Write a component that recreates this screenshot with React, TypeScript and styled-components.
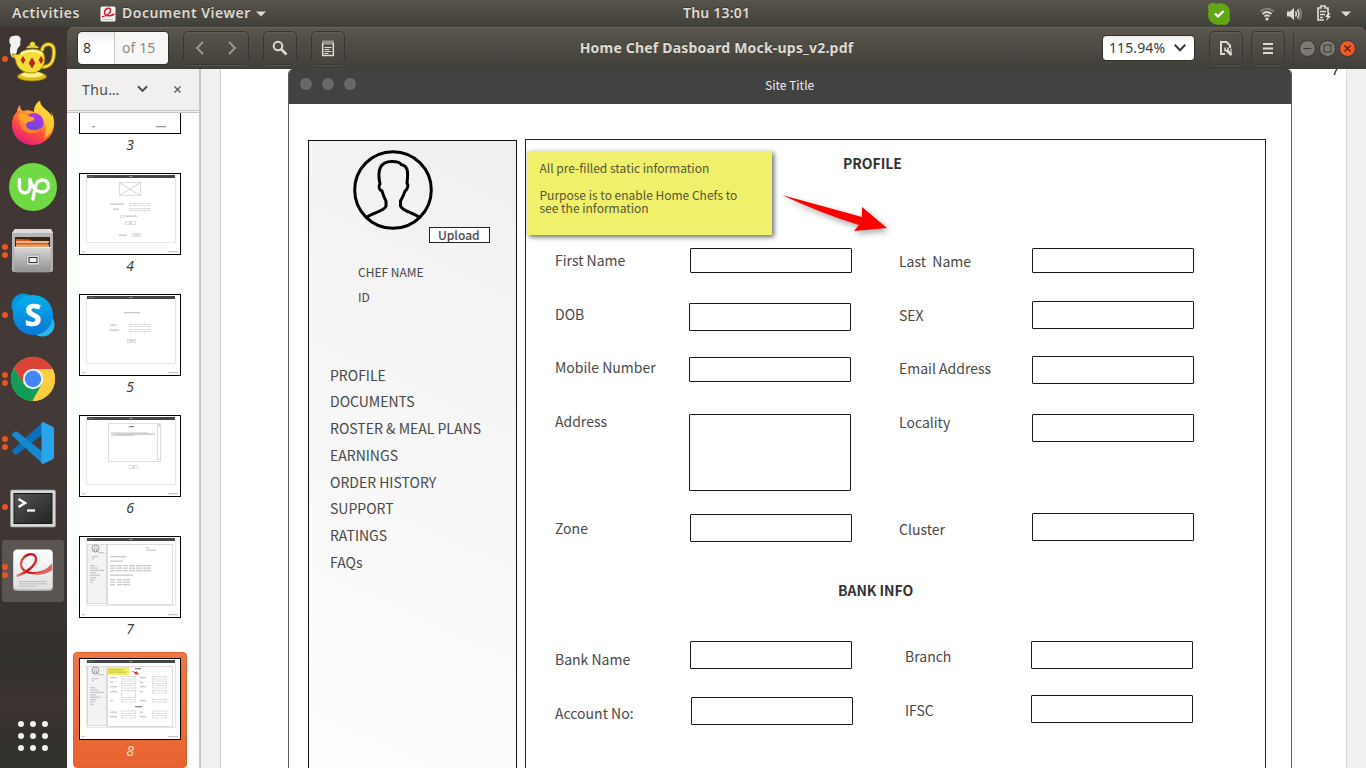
import React from "react";
import styled, { createGlobalStyle } from "styled-components";

const GlobalStyle = createGlobalStyle`
  * { box-sizing: border-box; }
  body { margin: 0; overflow: hidden; background: #3e3532; }
  svg { display: block; flex: none; }
`;

const uiFont = `"Noto Sans", "Open Sans", sans-serif`;
const docFont = `"Noto Sans CJK SC", "Noto Sans", sans-serif`;

const Desktop = styled.div`
  width: 1366px;
  height: 768px;
  display: flex;
  flex-direction: column;
  overflow: hidden;
  font-family: ${uiFont};
`;

/* ---------- system bar ---------- */
const SystemBar = styled.header`
  height: 27px;
  flex: none;
  display: grid;
  grid-template-columns: 683px 1fr;
  background: linear-gradient(#57544b, #403f39);
  color: #dfdbd2;
`;
const BarGroup = styled.div`
  display: flex;
  align-items: center;
  height: 27px;
`;
const BarText = styled.span<{ $w: number; $ls?: number }>`
  width: ${(p) => p.$w}px;
  font-size: 14px;
  font-weight: 600;
  line-height: 20px;
  margin-top: -1px;
  white-space: nowrap;
  letter-spacing: ${(p) => p.$ls ?? 0}px;
  text-shadow: 0 -1px 0 rgba(0, 0, 0, 0.35);
`;
const Gap = styled.span<{ $w: number }>`
  width: ${(p) => p.$w}px;
  flex: none;
`;

const Body = styled.div`
  flex: 1;
  display: flex;
  min-height: 0;
`;

/* ---------- dock ---------- */
const Dock = styled.nav`
  width: 67px;
  flex: none;
  display: flex;
  flex-direction: column;
  background: linear-gradient(#3e3533 0%, #433937 55%, #3a3431 75%, #33312d 86%, #3b3330 91%, #33312d 96%);
`;
const DockItem = styled.div<{ $active?: boolean }>`
  height: 62px;
  width: 62px;
  margin: 1px 0 1px 2px;
  flex: none;
  display: flex;
  align-items: center;
  border-radius: 3px;
  background: ${(p) => (p.$active ? "#5b5552" : "transparent")};
`;
const Running = styled.div`
  width: 6px;
  height: 48px;
  display: flex;
  flex-direction: column;
  justify-content: center;
  gap: 2px;
  flex: none;
`;
const RunDot = styled.i`
  width: 6px;
  height: 6px;
  border-radius: 3px;
  background: #e95420;
`;
const AppsGrid = styled.div`
  margin: auto 0 17px 18px;
  display: grid;
  grid-template-columns: repeat(3, 6px);
  gap: 6px;
`;
const AppsDot = styled.i`
  width: 6px;
  height: 6px;
  border-radius: 3px;
  background: #f0efee;
`;

/* ---------- viewer window ---------- */
const Viewer = styled.main`
  flex: 1;
  display: flex;
  flex-direction: column;
  min-width: 0;
`;
const HeaderBar = styled.div`
  height: 42px;
  flex: none;
  display: flex;
  align-items: center;
  padding: 0 9px 0 10px;
  background: linear-gradient(#5b574e, #3f3e38);
  border-radius: 7px 7px 0 0;
  box-shadow: inset 0 1px 0 #68645b;
  color: #dfdbd2;
`;
const PageEntry = styled.div`
  display: flex;
  width: 92px;
  height: 34px;
  border: 1px solid #32312c;
  border-radius: 5px;
  overflow: hidden;
  background: linear-gradient(#eeeeed, #fff 40%);
  font-size: 14px;
  line-height: 32px;
`;
const PageCurrent = styled.span`
  width: 37px;
  padding-left: 5px;
  color: #3c3c3c;
  border-right: 1px solid #c9c7c4;
`;
const PageTotal = styled.span`
  flex: 1;
  padding-left: 7px;
  color: #8b8b89;
  background: #f6f6f5;
  letter-spacing: 0.1px;
  white-space: nowrap;
`;
const ToolButton = styled.div<{ $w?: number }>`
  width: ${(p) => p.$w ?? 34}px;
  height: 34px;
  flex: none;
  display: flex;
  align-items: center;
  justify-content: center;
  border: 1px solid #383731;
  border-radius: 5px;
  background: linear-gradient(#56534a, #45443d);
  box-shadow: inset 0 1px 0 #605d54, 0 1px 0 #55534b;
`;
const WindowTitle = styled.div`
  width: 739px;
  margin-top: -2px;
  text-align: center;
  font-size: 14px;
  font-weight: 700;
  letter-spacing: 0.2px;
  white-space: nowrap;
  text-shadow: 0 -1px 0 rgba(0, 0, 0, 0.35);
`;
const ZoomEntry = styled.div`
  width: 93px;
  height: 26px;
  display: flex;
  align-items: center;
  justify-content: space-between;
  padding: 0 8px 0 6px;
  border: 1px solid #32312c;
  border-radius: 4px;
  background: linear-gradient(#f0f0ef, #fff 40%);
  color: #3c3c3c;
  font-size: 14px;
  line-height: 22px;
  letter-spacing: 0.1px;
`;
const Divider = styled.span`
  width: 1px;
  height: 28px;
  background: #3b3a34;
`;

const Content = styled.div`
  flex: 1;
  min-height: 0;
  display: flex;
  background: #f1f0ee;
`;

/* ---------- thumbnails ---------- */
const Side = styled.aside`
  width: 134px;
  flex: none;
  display: flex;
  flex-direction: column;
  background: #fff;
  border-right: 2px solid #cac8c6;
`;
const SideHead = styled.div`
  height: 44px;
  flex: none;
  display: flex;
  align-items: center;
  padding: 0 16px 4px 15px;
  background: linear-gradient(#f1f0ee 41px, #c9c7c5 41px, #c9c7c5 42px, #f1f0ee 42px, #f1f0ee 43px, #c9c7c5 43px);
  color: #4a4a48;
  font-size: 14px;
`;
const SideLabel = styled.span`
  width: 55px;
  letter-spacing: 0.4px;
`;
const ThumbList = styled.div`
  flex: 1;
  min-height: 0;
  overflow: hidden;
  padding-left: 6px;
`;
const ThumbItem = styled.div<{ $selected?: boolean }>`
  width: 114px;
  height: 116px;
  margin-bottom: 5px;
  padding: 5px;
  border-radius: 4px;
  border: ${(p) => (p.$selected ? "1px solid #d9622f" : "1px solid transparent")};
  background: ${(p) => (p.$selected ? "linear-gradient(#f07746, #e6642f)" : "transparent")};
  color: ${(p) => (p.$selected ? "#f7dccb" : "#3c3c3c")};
  &:first-child { margin-top: -67px; }
  &:nth-child(5) { margin-bottom: 6px; }
`;
const ThumbNumber = styled.div`
  margin-top: 1px;
  text-align: center;
  font-size: 14px;
  font-style: italic;
  line-height: 19px;
`;

/* ---------- document ---------- */
const Sheet = styled.div`
  width: 1127px;
  margin-left: 19px;
  flex: none;
  display: flex;
  align-items: flex-start;
  overflow: hidden;
  padding-left: 67px;
  background: #fff;
  border-left: 1px solid #cfcdcb;
  border-right: 1px solid #dedcda;
  font-family: ${docFont};
  color: #484848;
`;
const Frame = styled.section`
  width: 1004px;
  height: 720px;
  flex: none;
  border: 1px solid #5c5c5c;
  border-top: 0;
  border-radius: 5px 5px 0 0;
  overflow: hidden;
`;
const FrameBar = styled.div`
  height: 35px;
  display: flex;
  align-items: center;
  padding: 0 11px 5px;
  gap: 10px;
  background: #424242;
  color: #f0f0f0;
`;
const FrameDot = styled.i`
  width: 12px;
  height: 12px;
  border-radius: 6px;
  background: #686868;
`;
const FrameTitle = styled.div`
  margin-left: 399px;
  padding-top: 1px;
  font-size: 12px;
  line-height: 18px;
`;
const SheetNumber = styled.span`
  margin: -7px 0 0 39px;
  font-size: 13px;
  line-height: 16px;
  color: #000;
  font-style: italic;
`;
const FrameBody = styled.div`
  display: flex;
  align-items: flex-start;
  padding: 35px 0 0 19px;
`;
const Profile = styled.div`
  width: 209px;
  height: 700px;
  margin-top: 1px;
  display: flex;
  flex-direction: column;
  border: 1px solid #111;
  background: linear-gradient(25deg, #ffffff 0%, #fafafa 35%, #f0f0f0 100%);
`;
const Avatar = styled.div`
  margin: 8px 0 0 43px;
  height: 82px;
`;
const Upload = styled.div`
  width: 61px;
  height: 16px;
  margin: -4px 0 0 120px;
  padding-left: 8px;
  border: 1px solid #222;
  background: #fff;
  font-size: 12px;
  font-weight: 500;
  line-height: 14px;
`;
const ChefInfo = styled.div`
  margin: 17px 0 0 49px;
  font-size: 12px;
  line-height: 24.6px;
`;
const Menu = styled.ul`
  margin: 52.4px 0 0 21px;
  padding: 0;
  list-style: none;
  font-size: 14px;
  line-height: 26.75px;
  white-space: nowrap;
`;
const Panel = styled.div`
  position: relative;
  width: 741px;
  height: 700px;
  margin-left: 8px;
  border: 1px solid #222;
`;
const Heading = styled.h2<{ $top: number; $left: number }>`
  margin: ${(p) => p.$top}px 0 0 ${(p) => p.$left}px;
  font-size: 14px;
  font-weight: 700;
  line-height: 20px;
  letter-spacing: -0.05px;
  color: #333;
`;
const Fields = styled.div<{ $h: number }>`
  height: ${(p) => p.$h}px;
  display: grid;
  grid-template-columns: 134px 210px 133px 170px;
  padding-left: 29px;
`;
const LabelColumn = styled.div<{ $top: number; $indent?: number }>`
  margin: ${(p) => p.$top}px 0 0 ${(p) => p.$indent ?? 0}px;
  font-size: 14px;
  white-space: pre;
`;
const FieldLabel = styled.div<{ $rows?: number }>`
  height: ${(p) => (p.$rows ?? 1) * 53.5}px;
  line-height: 20px;
`;
const BoxColumn = styled.div`
  display: flex;
  flex-direction: column;
`;
const Box = styled.div<{ $gap: number; $h: number; $shift?: number }>`
  width: 162px;
  height: ${(p) => p.$h}px;
  margin: ${(p) => p.$gap}px 0 0 ${(p) => p.$shift ?? 0}px;
  border: 1px solid #1a1a1a;
  border-radius: 1px;
  background: #fff;
`;
const Note = styled.div`
  position: absolute;
  left: 1px;
  top: 11px;
  width: 245px;
  height: 84px;
  padding: 10px 12.500px;
  background: #f1f06b;
  box-shadow: 2px 2px 5px rgba(0, 0, 0, 0.6);
  font-size: 12px;
  line-height: 13.4px;
  color: #555536;
  white-space: pre;
`;
const Arrow = styled.svg`
  position: absolute;
  left: 254px;
  top: 49px;
  filter: drop-shadow(2px 3px 3px rgba(0, 0, 0, 0.35));
`;

/* ---------- drawings ---------- */
const PdfMini = () => (
  <svg width="16" height="16" viewBox="0 0 16 16">
    <rect x=".5" y=".5" width="15" height="15" rx="1.500" fill="#f4f4f4" />
    <path d="M2 11C8 9 11 6 10.500 3.500C9.500 1 4.500 2.500 4.500 6.500C4.500 10 9 11 14.500 8" fill="none" stroke="#cf1e24" strokeWidth="1.500" />
    <path d="M3 13.500h10" stroke="#bbb" />
  </svg>
);
const Triangle = () => (
  <svg width="10" height="6" viewBox="0 0 10 6"><path d="M0 .5h10L5 5.500z" fill="#dfdbd2" /></svg>
);

const Lamp = () => (
  <svg width="50" height="50" viewBox="0 0 50 50">
    <path d="M4 23C1 18 2 14 3 11C0 8 1 1 6 2C12 0 14 5 12 8C14 12 9 13 9 17C8 20 8 22 6 24z" fill="#f2f2f2" />
    <path d="M34 17C34 9 46 7 46 17C46 29 42 33 34 33" fill="none" stroke="#8d7300" strokeWidth="4.500" />
    <path d="M34 17C34 9 46 7 46 17C46 29 42 33 34 33" fill="none" stroke="#f4df45" strokeWidth="2.600" />
    <ellipse cx="24" cy="42.500" rx="14.500" ry="4.500" fill="#dcbf16" stroke="#8d7300" strokeWidth=".7" />
    <ellipse cx="24" cy="40.500" rx="11" ry="3" fill="#fff08a" />
    <path d="M4 20C9 20 11 22 13 18C19 14 30 14 35 18C40 27 34 39 24 39C14 39 10 34 8 29C8 26 6 23 4 20z" fill="#f3dc35" stroke="#8d7300" strokeWidth=".8" />
    <path d="M13 20C19 16 29 16 34 20" fill="none" stroke="#fff9b0" strokeWidth="2" />
    <path d="M18 14C20 10 29 10 31 14z" fill="#f8e75a" stroke="#a08200" strokeWidth=".6" />
    <circle cx="24.500" cy="10.500" r="2.700" fill="#f5df40" stroke="#a08200" strokeWidth=".5" />
    <path d="M15 22.500l2 3.500-2 3.500-2-3.500zM24 24l3 5-3 5-3-5zM33 22.500l2 3.500-2 3.500-2-3.500z" fill="#c31f1b" stroke="#80100d" strokeWidth=".5" />
  </svg>
);
const Firefox = () => (
  <svg width="50" height="50" viewBox="0 0 50 50">
    <defs>
      <linearGradient id="ff" x1=".8" y1="0" x2=".25" y2="1">
        <stop offset="0" stopColor="#fff44f" /><stop offset=".35" stopColor="#ffa52a" /><stop offset=".65" stopColor="#ff4f3c" /><stop offset="1" stopColor="#e31587" />
      </linearGradient>
      <linearGradient id="ffc" x1=".6" y1="0" x2=".3" y2="1"><stop offset="0" stopColor="#b833e1" /><stop offset="1" stopColor="#5a4fe0" /></linearGradient>
    </defs>
    <path d="M4 27C4 21 6 16 9 14C9 11 10 9 12 7C12 10 13 12 15 13C18 12 22 12 26 14C26 9 28 5 32 3C32 10 41 12 44 19C44 16 43 14 42 12C48 21 47 31 43 37C38 44 31 47 25 47C13 47 4 38 4 27z" fill="url(#ff)" />
    <path d="M26 14C26 9 28 5 32 3C32 10 41 12 44 19C48 29 42 38 36 40C41 31 37 17 26 14z" fill="#ffd43a" opacity=".75" />
    <circle cx="26" cy="24.500" r="9.500" fill="url(#ffc)" />
    <path d="M9 20C11 14 18 14 21 18C24 20 27 19 26 22C23 24 19 23 18 27C19 33 29 34 34 29C30 38 15 37 12 27C11 23 11 21 9 20z" fill="#ff8130" />
    <path d="M10 17C15 13 19 17 21 19C25 18 27 20 26 22C22 24 18 23 17 26C13 24 12 20 10 17z" fill="#ffa42c" />
  </svg>
);
const Upwork = () => (
  <svg width="50" height="50" viewBox="0 0 50 50">
    <circle cx="25" cy="25" r="24" fill="#6fda44" />
    <path d="M11.500 17.500v7.500C11.500 32.500 22 32.500 22 25v-7.500C23 23 27 29.500 34 30C42.500 30 42.500 18 34.500 18C28 18 27.500 24 25 37" fill="none" stroke="#fff" strokeWidth="3.500" strokeLinecap="round" strokeLinejoin="round" />
  </svg>
);
const Files = () => (
  <svg width="50" height="50" viewBox="0 0 50 50">
    <defs><linearGradient id="cab" x1="0" y1="0" x2="0" y2="1"><stop offset="0" stopColor="#d9d9d9" /><stop offset="1" stopColor="#929292" /></linearGradient></defs>
    <path d="M7 3h36l2 4v37q0 2-2 2H6q-2 0-2-2V7z" fill="#b5b5b5" />
    <path d="M7 3h36l2 4H4z" fill="#dcdcdc" />
    <path d="M7 11h35v11H7z" fill="#3c2415" />
    <path d="M8 13l14 .5 2 1.500h16v7H8z" fill="#d9541c" /><path d="M8 16h33" stroke="#f0d7b5" strokeWidth="1.500" /><path d="M8 18.500h33v2.500H8z" fill="#ee9f58" />
    <path d="M6 21h37v23q0 2-2 2H8q-2 0-2-2z" fill="url(#cab)" stroke="#aaa" strokeWidth=".6" />
    <path d="M6.500 21.500h36" stroke="#eee" />
    <rect x="18.500" y="29" width="13" height="10" rx="1.500" fill="#ddd" stroke="#888" strokeWidth=".6" />
    <rect x="21" y="31.500" width="8" height="5" fill="#eee" stroke="#333" />
  </svg>
);
const Skype = () => (
  <svg width="50" height="50" viewBox="0 0 50 50">
    <defs><linearGradient id="sk" x1="0" y1="0" x2="0" y2="1"><stop offset="0" stopColor="#05b1ec" /><stop offset="1" stopColor="#0877d6" /></linearGradient></defs>
    <circle cx="15.500" cy="15.500" r="12" fill="#0795df" /><circle cx="34.500" cy="34.500" r="12" fill="#2bb5ee" />
    <circle cx="25" cy="25" r="20" fill="url(#sk)" />
    <text x="25" y="35.500" textAnchor="middle" fontFamily="Open Sans" fontWeight="700" fontSize="30" fill="#fff" stroke="#fff" strokeWidth=".6">S</text>
  </svg>
);
const Chrome = () => (
  <svg width="50" height="50" viewBox="0 0 50 50">
    <circle cx="25" cy="25" r="22" fill="#ffcd40" />
    <path d="M25 15h19.700A22 22 0 0 0 5.900 14L15 29z" fill="#db4437" />
    <path d="M5.900 14A22 22 0 0 0 24.500 47L34 30L25 35L16 30z" fill="#0f9d58" />
    <path d="M34 30L24.500 47A22 22 0 0 0 44.600 15H25z" fill="#ffcd40" />
    <circle cx="25" cy="25" r="10.200" fill="#f4f4f4" /><circle cx="25" cy="25" r="8.200" fill="#4285f4" />
  </svg>
);
const Code = () => (
  <svg width="50" height="50" viewBox="0 0 50 50">
    <path d="M35 4v12L9 36.500q-1 .5-2 0l-2.500-2q-1-1.500 0-2.500z" fill="#0b70b8" />
    <path d="M35 46V34L9 13.500q-1-.5-2 0l-2.500 2q-1 1.500 0 2.500z" fill="#1688cd" />
    <path d="M35 4l9.500 4.500q1.500 1 1.500 2.500v28q0 1.500-1.500 2.500L35 46q-1 0-1.500-1V5z" fill="#2ba4ee" />
  </svg>
);
const Terminal = () => (
  <svg width="50" height="50" viewBox="0 0 50 50">
    <defs><linearGradient id="tm" x1="0" y1="0" x2="1" y2="1"><stop offset="0" stopColor="#555" /><stop offset="1" stopColor="#222" /></linearGradient></defs>
    <rect x="2.500" y="8" width="45" height="37" rx="1.500" fill="#d7d7d7" stroke="#999" strokeWidth=".7" />
    <rect x="6" y="11.500" width="38" height="30" fill="url(#tm)" stroke="#151515" />
    <path d="M10.500 17l6.500 4-6.500 4" fill="none" stroke="#fff" strokeWidth="2.500" /><path d="M19 28.500h8" stroke="#fff" strokeWidth="2.200" />
  </svg>
);
const Evince = () => (
  <svg width="50" height="50" viewBox="0 0 50 50">
    <defs>
      <linearGradient id="ev" x1="0" y1="0" x2="0" y2="1"><stop offset="0" stopColor="#fff" /><stop offset="1" stopColor="#dedede" /></linearGradient>
      <linearGradient id="evr" x1="0" y1="0" x2="1" y2="0"><stop offset="0" stopColor="#e89393" /><stop offset=".3" stopColor="#c71414" /><stop offset=".6" stopColor="#d43333" /><stop offset="1" stopColor="#e57a7a" /></linearGradient>
    </defs>
    <rect x="5" y="4" width="40" height="41" rx="4" fill="#aaa" />
    <rect x="5.500" y="3.500" width="39" height="40" rx="4" fill="url(#ev)" />
    <path d="M8.500 30C20 26 28 19 28 13C28 6 18 7 14 14C9 24 22 33 43 22" fill="none" stroke="url(#evr)" strokeWidth="2.400" />
    <path d="M24 28C33 27 39 23 44 17.500v7C38 28 31 30 24 28z" fill="#df6262" />
    <path d="M11 35.500h28M11 37.800h28M11 40.100h18" stroke="#bfbfbf" />
  </svg>
);

const AvatarArt = () => (
  <svg width="82" height="82" viewBox="0 0 82 82" fill="none" stroke="#000">
    <circle cx="41" cy="41" r="38.300" strokeWidth="3" />
    <path d="M15 68C20 64 33 62 34 57V52C32 49 31 45 30 42C27 41 26 37 28 35C25 21 28 12.500 40 12.500C44 12.500 48 13 49 15.500C57 17 56 25 55 34.500C57 36 55 41 53 42C52 46 50 49 48.500 52V57C50 62 62 64 67 68" strokeWidth="3" strokeLinejoin="round" />
  </svg>
);

type Mark = [number, number, number];
const Marks = ({ items, color = "#c9c9c9" }: { items: Mark[]; color?: string }) => (
  <g fill={color}>{items.map(([x, y, w], i) => <rect key={i} x={x} y={y} width={w} height="1.300" />)}</g>
);
const Outline = ({ r }: { r: [number, number, number, number] }) => (
  <rect x={r[0]} y={r[1]} width={r[2]} height={r[3]} fill="#fff" stroke="#dedede" />
);

const ThumbSide = () => (
  <g>
    <rect x="8.500" y="8.500" width="19" height="59" fill="#f3f3f3" stroke="#d9d9d9" />
    <rect x="28.500" y="8.500" width="65" height="60" fill="#fff" stroke="#dcdcdc" />
    <circle cx="16.500" cy="12.500" r="3.500" fill="#eee" stroke="#999" />
    <path d="M15.500 16v-3.500q1-2 2 0V16" fill="none" stroke="#999" strokeWidth=".8" />
    <Marks items={[[19, 16, 6], [13, 20, 6], [13, 22, 2], [11, 29, 5], [11, 31.400, 8], [11, 33.800, 14], [11, 36.200, 6], [11, 38.600, 10], [11, 41, 6], [11, 43.400, 5], [11, 45.800, 3]]} />
  </g>
);

const Thumb = ({ page }: { page: number }) => (
  <svg width="102" height="82" viewBox="0 0 102 82">
    <rect width="102" height="82" fill="#000" />
    <rect x="1" y="1" width="100" height="80" fill="#fff" />
    {page !== 3 && (
      <g>
        <path d="M7.500 4V69.500H96.500V4" fill="none" stroke="#e6e6e6" />
        <rect x="8" y="2" width="88" height="3" fill="#444" />
        <path d="M9.500 3.500h1M11.500 3.500h1M13.500 3.500h1M50 3.500h4" stroke="#888" />
      </g>
    )}
    {page === 3 ? <Marks items={[[13, 74, 3], [77, 74, 10]]} color="#999" /> : <Marks items={[[3, 78, 3], [89, 78, 10]]} />}
    {page === 4 && (
      <g>
        <Outline r={[40.500, 9.500, 21, 13]} /><path d="M40.500 9.500l21 13m0-13l-21 13" stroke="#d5d5d5" />
        <Outline r={[50.500, 30.500, 20, 2]} /><Outline r={[50.500, 35.500, 20, 2]} /><Outline r={[41.500, 42.500, 3, 2]} />
        <Outline r={[46.500, 48.500, 10, 3]} /><Outline r={[53.500, 60.500, 8, 3]} />
        <Marks items={[[31, 30.500, 14], [34, 35.500, 6], [46, 42.500, 12], [50, 49.500, 3], [40, 61.500, 8], [55, 61.500, 5]]} />
      </g>
    )}
    {page === 5 && (
      <g>
        <Outline r={[50.500, 30.500, 20, 2]} /><Outline r={[50.500, 35.500, 20, 2]} /><Outline r={[48.500, 45.500, 8, 3]} />
        <Marks items={[[45, 18, 16], [31, 30.500, 7], [30, 35.500, 10], [50, 46, 5]]} />
      </g>
    )}
    {page === 6 && (
      <g>
        <Outline r={[29.500, 8.500, 52, 38]} /><Outline r={[78.500, 9.500, 3, 35]} /><Outline r={[50.500, 50.500, 8, 3]} />
        <Marks items={[[50, 11, 5]]} color="#888" />
        <Marks items={[[32, 17.500, 37], [37, 18.500, 39], [32, 19.500, 24], [53, 51.500, 3], [79, 10, 2]]} />
      </g>
    )}
    {page === 7 && (
      <g>
        <ThumbSide />
        <Marks items={[[67, 11, 3], [67, 13.500, 10], [31, 20, 16], [31, 24.500, 13], [31, 38.500, 23]]} />
        <Marks items={[29, 31.500, 34].flatMap((y) => [[31, y, 5], [37, y, 6], [44, y, 5], [50, y, 6], [57, y, 6], [64, y, 8]] as Mark[])} />
        <Marks items={[43, 45.500, 48].flatMap((y) => [[31, y, 5], [38, y, 5], [44, y, 7]] as Mark[])} />
      </g>
    )}
    {page === 8 && (
      <g>
        <ThumbSide />
        <rect x="28" y="9" width="22" height="8" fill="#f1ee62" />
        <Marks items={[[29, 11, 15], [29, 13.500, 18]]} color="#c9c653" />
        <path d="M52 13l5 1v-1l3 3.500-4-.3V15z" fill="#f01818" />
        {[18.500, 23, 27.500, 32.500, 41.500, 53, 57.500].map((y, i) => (
          <g key={y}>
            <Outline r={[42.500, y, 14, i === 3 ? 7 : 2.500]} /><Outline r={[73.500, y, 14, 2.500]} />
            <Marks items={[[31, y + 0.500, i % 3 === 1 ? 3 : 7], [61, y + 0.500, i % 2 ? 3 : 6]]} />
          </g>
        ))}
        <Marks items={[[56, 10, 6], [56, 48, 7]]} color="#888" />
      </g>
    )}
  </svg>
);

const dock = [
  { icon: <Lamp />, runs: 1 },
  { icon: <Firefox />, runs: 0 },
  { icon: <Upwork />, runs: 0 },
  { icon: <Files />, runs: 2 },
  { icon: <Skype />, runs: 1 },
  { icon: <Chrome />, runs: 2 },
  { icon: <Code />, runs: 2 },
  { icon: <Terminal />, runs: 1 },
  { icon: <Evince />, runs: 2, active: true },
];
const menu = ["PROFILE", "DOCUMENTS", "ROSTER & MEAL PLANS", "EARNINGS", "ORDER HISTORY", "SUPPORT", "RATINGS", "FAQs"];

export default function App() {
  return (
    <Desktop>
      <GlobalStyle />
      <SystemBar>
        <BarGroup>
          <Gap $w={12} />
          <BarText $w={88} $ls={0.55}>Activities</BarText>
          <PdfMini />
          <Gap $w={6} />
          <BarText $w={134} $ls={0.5}>Document Viewer</BarText>
          <Triangle />
        </BarGroup>
        <BarGroup>
          <BarText $w={525} $ls={0.2}>Thu 13:01</BarText>
          <svg width="22" height="22" viewBox="0 0 22 22">
            <path d="M0 4Q0 0 5 0Q9 1 12 0Q22 1 22 10Q21 14 22 17Q20 22 16 22Q13 21 10 22Q0 20 0 12Q1 8 0 4z" fill="#62a814" />
            <path d="M7 10.500l3 3 5.500-5.500" fill="none" stroke="#fff" strokeWidth="2.200" />
          </svg>
          <Gap $w={29} />
          <svg width="16" height="14" viewBox="0 0 16 14" fill="none" strokeWidth="1.800">
            <path d="M1.500 4.500Q8-1 14.500 4.500" stroke="#858279" /><path d="M3.500 7Q8 3 12.500 7M5.500 9.500Q8 7 10.500 9.500" stroke="#dfdbd2" /><circle cx="8" cy="12" r="1.600" fill="#dfdbd2" />
          </svg>
          <Gap $w={11} />
          <svg width="17" height="14" viewBox="0 0 17 14" fill="none" strokeWidth="1.500">
            <path d="M1 4.500h3L8 1v12L4 9.500H1z" fill="#dfdbd2" /><path d="M9.500 4.500q1.800 2.500 0 5M11.500 2.500q3 4.500 0 9" stroke="#dfdbd2" /><path d="M13.500 1q4 6 0 12" stroke="#858279" />
          </svg>
          <Gap $w={13} />
          <svg width="16" height="17" viewBox="0 0 16 17" fill="none" stroke="#dfdbd2" strokeWidth="1.700">
            <path d="M12 8V3H9V1H5v2H2v12h6M4 6.500h6M4 9.500h5M4 12.500h3" /><path d="M12 8l-3 4h2.500l-1.500 4 5-5h-2.500l2-3z" fill="#dfdbd2" stroke="none" />
          </svg>
          <Gap $w={9} />
          <Triangle />
        </BarGroup>
      </SystemBar>
      <Body>
        <Dock>
          {dock.map((d, i) => (
            <DockItem key={i} $active={d.active}>
              <Running>{Array.from({ length: d.runs }, (_, k) => <RunDot key={k} />)}</Running>
              {d.icon}
            </DockItem>
          ))}
          <AppsGrid>{Array.from({ length: 9 }, (_, k) => <AppsDot key={k} />)}</AppsGrid>
        </Dock>
        <Viewer>
          <HeaderBar>
            <PageEntry><PageCurrent>8</PageCurrent><PageTotal>of 15</PageTotal></PageEntry>
            <Gap $w={14} />
            <ToolButton $w={66}>
              <svg width="42" height="14" viewBox="0 0 42 14" fill="none" stroke="#99968d" strokeWidth="2"><path d="M8 1L2 7l6 6M34 1l6 6-6 6" /></svg>
            </ToolButton>
            <Gap $w={14} />
            <ToolButton>
              <svg width="16" height="16" viewBox="0 0 16 16" fill="none" stroke="#dfdbd2"><circle cx="6" cy="6" r="4.300" strokeWidth="2" /><path d="M9 9l5.500 5.500" strokeWidth="2.500" /></svg>
            </ToolButton>
            <Gap $w={14} />
            <ToolButton>
              <svg width="14" height="17" viewBox="0 0 14 17" fill="none" stroke="#dfdbd2"><path d="M1.700 3v12.500h10.600V3" strokeWidth="1.500" /><path d="M2 .5v4M4 .5v4M6 .5v4M8 .5v4M10 .5v4M12 .5v4M3.500 7.500h7M3.500 9.500h5M3.500 11.500h7M3.500 13.500h4" /></svg>
            </ToolButton>
            <Gap $w={2} />
            <WindowTitle>Home Chef Dasboard Mock-ups_v2.pdf</WindowTitle>
            <Gap $w={16} />
            <ZoomEntry>
              115.94%
              <svg width="12" height="8" viewBox="0 0 12 8" fill="none" stroke="#3c3c3c" strokeWidth="2"><path d="M.7.700L6 6.300 11.300.700" /></svg>
            </ZoomEntry>
            <Gap $w={14} />
            <ToolButton>
              <svg width="14" height="16" viewBox="0 0 14 16" fill="none" stroke="#dfdbd2" strokeWidth="2"><path d="M6 14H2V2h5.500L11 5.500V8" /><path d="M12 14.500V8.500" strokeWidth="1.200" /><path d="M8 10.500l4.500 4.500" strokeWidth="2.800" /><path d="M6 7.500v3h3V7.500" strokeWidth="1.600" /></svg>
            </ToolButton>
            <Gap $w={8} />
            <ToolButton>
              <svg width="10" height="11" viewBox="0 0 10 11" stroke="#dfdbd2" strokeWidth="2"><path d="M0 1h10M0 5.500h10M0 10h10" /></svg>
            </ToolButton>
            <Gap $w={8} />
            <Divider />
            <Gap $w={5} />
            <svg width="57" height="17" viewBox="0 0 57 17" fill="none">
              <circle cx="8.500" cy="8.500" r="8" fill="#7b7972" stroke="#34332e" /><path d="M4.500 8.500h8" stroke="#3c3b36" />
              <circle cx="28.500" cy="8.500" r="8" fill="#7b7972" stroke="#34332e" /><rect x="25" y="5" width="7" height="7" stroke="#3c3b36" />
              <circle cx="48.500" cy="8.500" r="8" fill="#ee5a2c" stroke="#34332e" /><path d="M45.500 5.500l6 6m0-6l-6 6" stroke="#4a1d0c" strokeWidth="1.200" />
            </svg>
          </HeaderBar>
          <Content>
            <Side>
              <SideHead>
                <SideLabel>Thu…</SideLabel>
                <svg width="11" height="8" viewBox="0 0 12 8" fill="none" stroke="#4a4a48" strokeWidth="2"><path d="M1 1l5 5 5-5" /></svg>
                <Gap $w={26} />
                <svg width="7" height="7" viewBox="0 0 7 7" stroke="#555" strokeWidth="1.200"><path d="M.5.500l6 6m0-6l-6 6" /></svg>
              </SideHead>
              <ThumbList>
                {[3, 4, 5, 6, 7, 8].map((n) => (
                  <ThumbItem key={n} $selected={n === 8}><Thumb page={n} /><ThumbNumber>{n}</ThumbNumber></ThumbItem>
                ))}
              </ThumbList>
            </Side>
            <Sheet>
              <Frame>
                <FrameBar><FrameDot /><FrameDot /><FrameDot /><FrameTitle>Site Title</FrameTitle></FrameBar>
                <FrameBody>
                  <Profile>
                    <Avatar><AvatarArt /></Avatar>
                    <Upload>Upload</Upload>
                    <ChefInfo><div>CHEF NAME</div><div>ID</div></ChefInfo>
                    <Menu>{menu.map((m) => <li key={m}>{m}</li>)}</Menu>
                  </Profile>
                  <Panel>
                    <Heading $top={13} $left={317}>PROFILE</Heading>
                    <Fields $h={407}>
                      <LabelColumn $top={77}>
                        <FieldLabel>First Name</FieldLabel><FieldLabel>DOB</FieldLabel><FieldLabel>Mobile Number</FieldLabel><FieldLabel $rows={2}>Address</FieldLabel><FieldLabel>Zone</FieldLabel>
                      </LabelColumn>
                      <BoxColumn>
                        <Box $gap={75} $h={25} $shift={1} /><Box $gap={30} $h={28} /><Box $gap={26} $h={25} /><Box $gap={32} $h={77} /><Box $gap={23} $h={28} $shift={1} />
                      </BoxColumn>
                      <LabelColumn $top={78}>
                        <FieldLabel>{"Last  Name"}</FieldLabel><FieldLabel>SEX</FieldLabel><FieldLabel>Email Address</FieldLabel><FieldLabel $rows={2}>Locality</FieldLabel><FieldLabel>Cluster</FieldLabel>
                      </LabelColumn>
                      <BoxColumn>
                        <Box $gap={75} $h={25} /><Box $gap={28} $h={28} /><Box $gap={27} $h={28} /><Box $gap={30} $h={28} /><Box $gap={71} $h={28} />
                      </BoxColumn>
                    </Fields>
                    <Heading $top={0} $left={312}>BANK INFO</Heading>
                    <Fields $h={160}>
                      <LabelColumn $top={49}><FieldLabel>Bank Name</FieldLabel><FieldLabel>Account No:</FieldLabel></LabelColumn>
                      <BoxColumn><Box $gap={41} $h={28} $shift={1} /><Box $gap={28} $h={28} $shift={2} /></BoxColumn>
                      <LabelColumn $top={46} $indent={6}><FieldLabel>Branch</FieldLabel><FieldLabel>IFSC</FieldLabel></LabelColumn>
                      <BoxColumn><Box $gap={41} $h={28} $shift={-1} /><Box $gap={26} $h={28} $shift={-1} /></BoxColumn>
                    </Fields>
                    <Note>{"All pre-filled static information\n\nPurpose is to enable Home Chefs to\nsee the information"}</Note>
                    <Arrow width="112" height="50" viewBox="0 0 112 50">
                      <path d="M2 6L82 28V18L107 39L74 42L79 36Q40 24 2 6z" fill="#fe0000" />
                    </Arrow>
                  </Panel>
                </FrameBody>
              </Frame>
              <SheetNumber>7</SheetNumber>
            </Sheet>
          </Content>
        </Viewer>
      </Body>
    </Desktop>
  );
}
